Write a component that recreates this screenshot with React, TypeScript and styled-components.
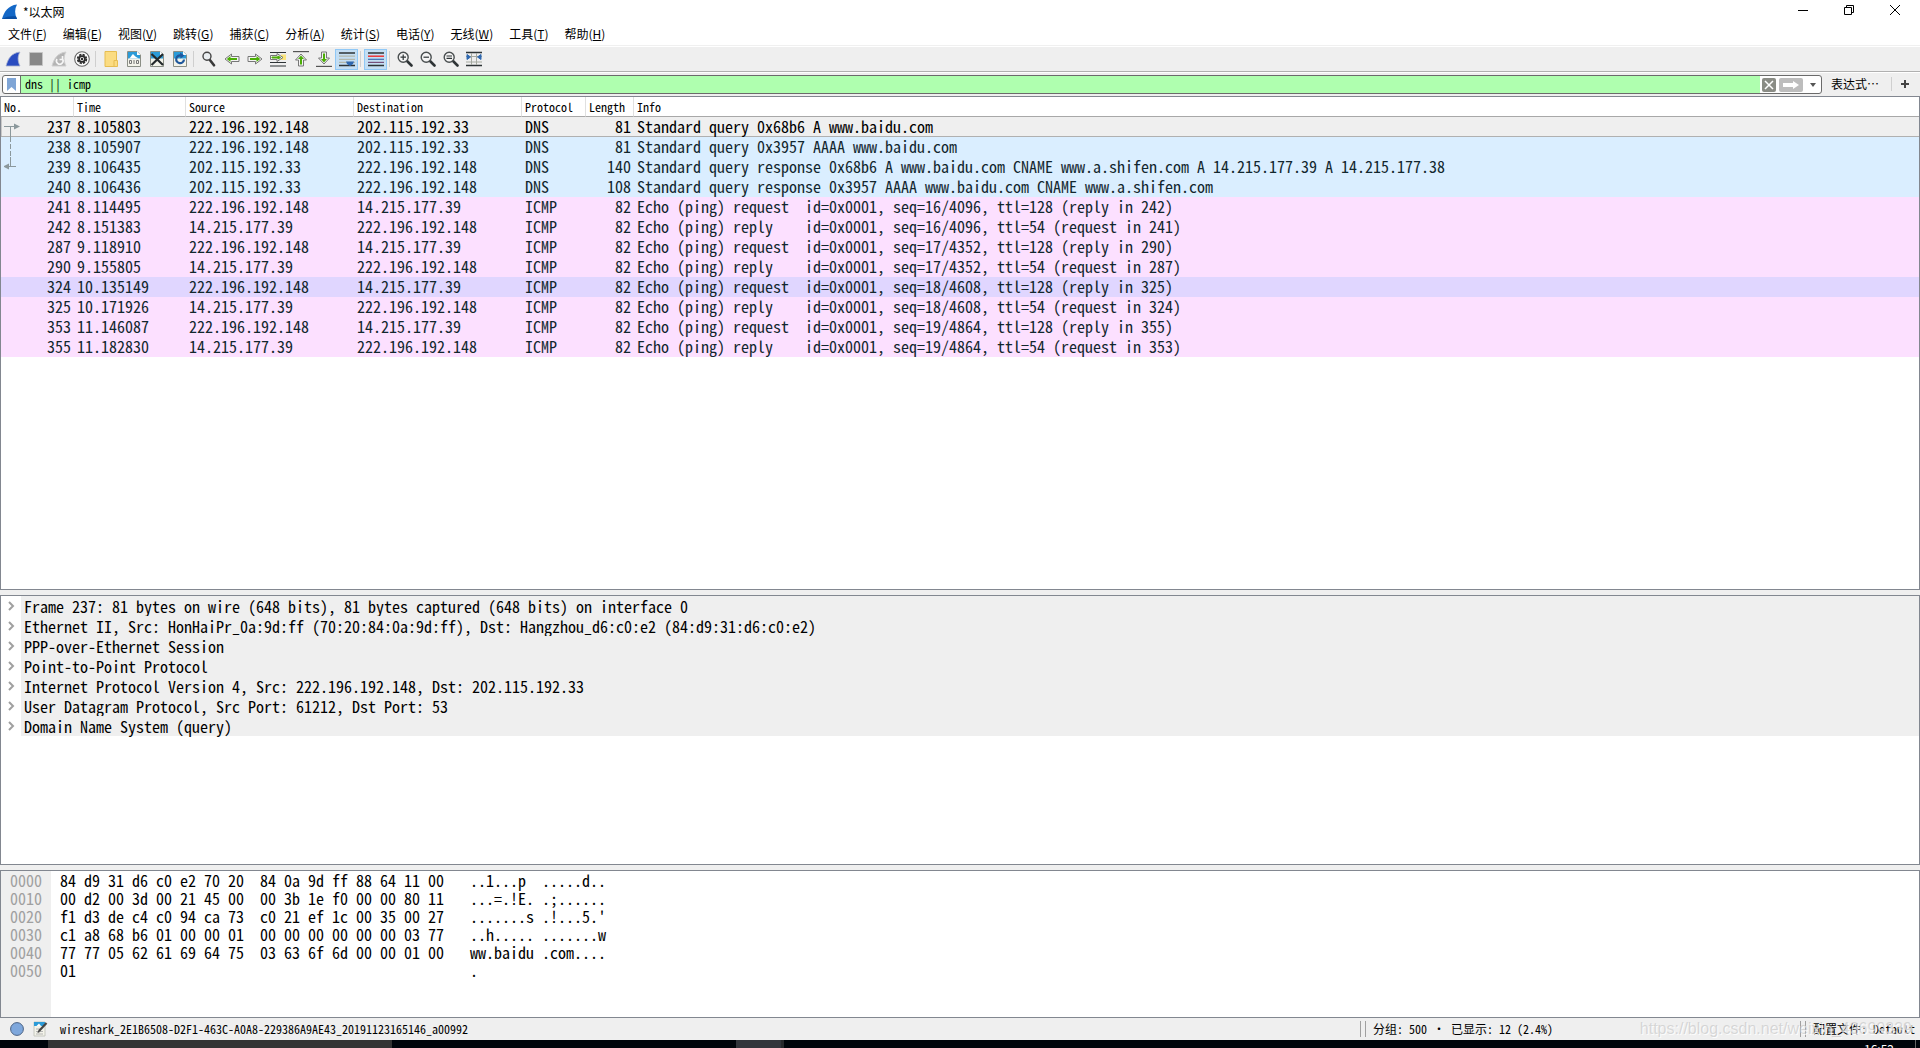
import React from "react";
import styled, { createGlobalStyle } from "styled-components";

const uiFont = '"Noto Sans CJK SC", "Noto Sans", sans-serif';
const monoFont = '"Noto Sans Mono CJK SC", "Liberation Mono", monospace';

const GlobalStyle = createGlobalStyle`
  *, *::before, *::after { box-sizing: border-box; }
  body { margin: 0; overflow: hidden; background: #fff; color: #000; }
  button, input { font: inherit; color: inherit; margin: 0; padding: 0; border: 0; background: none; border-radius: 0; outline: none; }
  svg { display: block; flex: none; }
`;

const Window = styled.div`
  display: flex;
  flex-direction: column;
  height: 100vh;
  font: 12px/18px ${monoFont};
  background: #efefef;
`;

const TitleBar = styled.header`
  display: flex;
  align-items: center;
  gap: 5px;
  height: 23px;
  padding: 0 2px;
  background: #fff;
  font-family: ${uiFont};
`;

const Title = styled.h1`
  flex: 1;
  margin: 0;
  font-size: 12px;
  font-weight: 400;
`;

const WindowButtons = styled.div`
  display: flex;
  align-self: flex-start;
`;

const WindowButton = styled.button`
  display: flex;
  align-items: center;
  justify-content: center;
  width: 46px;
  height: 20px;
`;

const MenuBar = styled.nav`
  display: flex;
  height: 23px;
  border-bottom: 1px solid #f0f0f0;
  background: #fff;
  font-family: ${uiFont};
`;

const MenuItem = styled.button`
  padding: 0 8px;
  white-space: nowrap;
`;

const Toolbar = styled.div`
  display: flex;
  align-items: center;
  height: 26px;
  padding: 0 1px;
  border-top: 1px solid #fff;
  border-bottom: 1px solid #b0b0b0;
`;

const ToolButton = styled.button<{ $on?: boolean }>`
  display: flex;
  align-items: center;
  justify-content: center;
  width: 23px;
  height: 21px;
  border: 1px solid ${(p) => (p.$on ? "#90c8f6" : "transparent")};
  background: ${(p) => (p.$on ? "#c4def3" : "transparent")};
`;

const ToolSeparator = styled.span`
  width: 6px;
  height: 16px;
  background: linear-gradient(#cfcfcf, #cfcfcf) 2px 0 / 1px 100% no-repeat;
`;

const FilterBar = styled.div`
  display: flex;
  align-items: flex-start;
  height: 24px;
  padding: 2px 11px 0 2px;
  border-top: 1px solid #fff;
`;

const FilterBox = styled.div`
  display: flex;
  align-items: center;
  flex: 1;
  height: 19px;
  margin-right: 9px;
  border: 1px solid #6b6b6b;
  border-radius: 3px;
  background: #fff;
  overflow: hidden;
`;

const BookmarkButton = styled.button`
  width: 18px;
  height: 17px;
  padding-left: 4px;
  border-right: 1px solid #6b6b6b;
`;

const FilterInput = styled.input`
  flex: 1;
  height: 17px;
  padding: 0 4px 2px;
  background: #afffaf;
`;

const FilterActions = styled.div`
  display: flex;
  align-items: center;
  gap: 3px;
  padding-left: 2px;
`;

const FilterAction = styled.button<{ $width: number; $fill?: string }>`
  display: flex;
  align-items: center;
  justify-content: center;
  width: ${(p) => p.$width}px;
  height: 14px;
  border-radius: 2px;
  background: ${(p) => p.$fill || "none"};
`;

const BarButton = styled.button`
  display: flex;
  align-items: center;
  height: 18px;
`;

const FilterSeparator = styled.span`
  width: 1px;
  height: 14px;
  margin: 2px 9px 0 12px;
  background: #cfcfcf;
`;

const Panels = styled.main`
  display: flex;
  flex-direction: column;
  flex: 1;
  gap: 5px;
  min-height: 0;
`;

const Panel = styled.section<{ $share: number }>`
  flex: ${(p) => p.$share} 1 0;
  min-height: 0;
  border: 1px solid #828790;
  background: #fff;
  overflow: hidden;
`;

const PacketTable = styled.table`
  width: 100%;
  table-layout: fixed;
  border-collapse: separate;
  border-spacing: 0;
`;

const HeadCell = styled.th<{ $width?: number }>`
  width: ${(p) => (p.$width ? p.$width + "px" : "auto")};
  height: 20px;
  padding: 0 3px;
  border-right: 1px solid #e0e0e0;
  border-bottom: 1px solid #a8a8a8;
  font-weight: 400;
  line-height: 18px;
  text-align: left;
  white-space: nowrap;
  &:last-child { border-right: 0; }
`;

type Tone = "selected" | "dns" | "icmp" | "hover";
const tones: Record<Tone, string> = {
  selected: "#efefef",
  dns: "#daeeff",
  icmp: "#fce0ff",
  hover: "#e0d6ff",
};

const PacketRow = styled.tr<{ $tone: Tone }>`
  height: 20px;
  background: ${(p) => tones[p.$tone]};
  color: ${(p) => (p.$tone === "selected" ? "#000" : "#12272e")};
  box-shadow: ${(p) => (p.$tone === "selected" ? "inset 0 -1px #b0b0b0, inset 1px 0 #c8c8c8" : "none")};
`;

const Cell = styled.td<{ $right?: boolean }>`
  height: 20px;
  padding: 0 3px 2px;
  font-size: 16px;
  line-height: 18px;
  text-align: ${(p) => (p.$right ? "right" : "left")};
  vertical-align: top;
  white-space: pre;
`;

const NumberCell = styled.div`
  display: flex;
  justify-content: space-between;
  height: 18px;
`;

const TreeList = styled.ul`
  margin: 0;
  padding: 0;
  list-style: none;
`;

const TreeItem = styled.li`
  display: flex;
  height: 20px;
  font-size: 16px;
  line-height: 20px;
`;

const Expander = styled.button`
  display: flex;
  align-items: center;
  width: 20px;
  padding-left: 7px;
`;

const TreeLabel = styled.span`
  flex: 1;
  padding-left: 3px;
  background: #efefef;
  white-space: pre;
`;

const HexPanel = styled(Panel)`
  display: flex;
`;

const HexColumn = styled.pre<{ $muted?: boolean }>`
  margin: 0;
  padding: 0 9px;
  padding-right: ${(p) => (p.$muted ? "9px" : "17px")};
  background: ${(p) => (p.$muted ? "#efefef" : "#fff")};
  color: ${(p) => (p.$muted ? "#a0a0a0" : "#000")};
  font: 16px/18px ${monoFont};
`;

const StatusBar = styled.footer`
  position: relative;
  display: grid;
  grid-template-columns: 1fr 440px 120px;
  align-items: center;
  height: 22px;
  white-space: pre;
`;

const StatusMain = styled.div`
  display: flex;
  align-items: center;
  padding-left: 10px;
`;

const StatusButton = styled.button`
  width: 23px;
`;

const StatusFile = styled.span`
  padding-left: 4px;
`;

const StatusSection = styled.div`
  height: 16px;
  margin-left: 4px;
  padding-left: 7px;
  border-left: 1px solid #a0a0a0;
  line-height: 16px;
`;

const StatusGroup = styled.div`
  height: 16px;
  border-left: 1px solid #a0a0a0;
`;

const Watermark = styled.span`
  position: absolute;
  right: 8px;
  top: 2px;
  color: rgba(190, 190, 190, 0.55);
  font: 16px/18px "Liberation Sans", sans-serif;
  text-shadow: 1px 1px rgba(255, 255, 255, 0.8);
`;

const Taskbar = styled.div`
  display: flex;
  height: 8px;
  padding-left: 48px;
  background: #00050b;
  overflow: hidden;
`;

const TaskSearch = styled.div`
  width: 344px;
  margin-right: 344px;
  background: #333;
`;

const TaskApp = styled.div`
  width: 48px;
  border-right: 3px solid #26282b;
  background: #32353b;
`;

const Clock = styled.time`
  margin-left: auto;
  padding-right: 21px;
  border-right: 1px solid #666;
  margin-right: 4px;
  color: #fff;
  font: 12px/18px ${uiFont};
`;

const Icon = ({ children, size = 16 }: { children: React.ReactNode; size?: number }) => (
  <svg width={size} height={size} viewBox="0 0 16 16" fill="none" aria-hidden="true">
    {children}
  </svg>
);

const finPath = "M1 15C3 8 6 2 15 1C12.5 5 12.5 10 15 15Z";

const Page = () => (
  <>
    <path d="M1.500 .5H11L14.500 4V15.500H1.500Z" fill="#f3f3ea" stroke="#8b8f86" />
    <path d="M2 1H11L14 4V7.500H2Z" fill="#2b9bd8" />
    <path d="M11 .5V4H14.500Z" fill="#fff" />
  </>
);

const Arrow = ({ turn = 0, bar = false }: { turn?: number; bar?: boolean }) => (
  <Icon>
    <g transform={`rotate(${turn} 8 8)`}>
      {bar && <path d="M15.400 0V16" stroke="#555" strokeWidth="1.200" />}
      <path
        d={bar ? "M1 5.500H7V2.500L13 8L7 13.500V10.500H1Z" : "M1 5.500H8.500V3L15 8L8.500 13V10.500H1Z"}
        fill="#f4f4f4"
        stroke="#777"
        strokeLinejoin="round"
      />
      <path
        d={bar ? "M2.500 7H8V5L11.500 8L8 11V9H2.500Z" : "M3 7H9.500V5L13.200 8L9.500 11V9H3Z"}
        fill="#4cae06"
      />
    </g>
  </Icon>
);

const Lens = ({ mark }: { mark: string }) => (
  <Icon>
    <path d="M9.500 9.500L14.500 14.500" stroke="#2e3436" strokeWidth="2.600" strokeLinecap="round" />
    <circle cx="6.200" cy="6.200" r="5" fill="#f4f4f4" stroke="#4a4f50" strokeWidth="1.400" />
    <path d={mark} stroke="#2e3436" strokeWidth="1.200" />
  </Icon>
);

type Tool = { name: string; on?: boolean; icon: React.ReactNode } | null;

const tools: Tool[] = [
  { name: "开始捕获", icon: <Icon><path d={finPath} fill="#2a4cc0" stroke="#aab3cf" strokeWidth=".8" /></Icon> },
  { name: "停止捕获", icon: <Icon><path d="M1.500 1.500H14.500V14.500H1.500Z" fill="#888" stroke="#c4c4c4" /></Icon> },
  {
    name: "重新开始捕获",
    icon: (
      <Icon>
        <path d={finPath} fill="#b4b4b4" stroke="#cfcfcf" />
        <path d="M6 8A3.300 3.300 0 1 0 11.500 8M11.500 5V8.500H8.500" stroke="#f6f6f6" strokeWidth="1.600" />
      </Icon>
    ),
  },
  {
    name: "捕获选项",
    icon: (
      <Icon>
        <circle cx="8" cy="8" r="7.300" fill="#fff" stroke="#666" strokeWidth="1.100" />
        <circle cx="8" cy="8" r="4.300" stroke="#2b2b2b" strokeWidth="1.800" strokeDasharray="2.300 1.080" />
        <circle cx="8" cy="8" r="2.900" fill="#fff" stroke="#2b2b2b" strokeWidth="1.800" />
        <circle cx="8" cy="8" r="1.200" fill="#2b2b2b" />
      </Icon>
    ),
  },
  null,
  {
    name: "打开",
    icon: (
      <Icon>
        <path d="M2 .5H13.500V15.500H2Z" fill="#fbdc82" stroke="#e6bd51" />
        <path d="M11 9.500H14.500V15.500H11Z" fill="#fbdc82" stroke="#e6bd51" />
      </Icon>
    ),
  },
  {
    name: "保存",
    icon: (
      <Icon>
        <Page />
        <path d="M3 7.500C5 6.500 5.500 4 7 3C8.500 4.500 10 6.500 13 7.500Z" fill="#fff" />
        <path d="M3.500 9.500H5.500V12.500H3.500ZM8 9V13M10.500 9.500H12.500V12.500H10.500Z" stroke="#777" />
      </Icon>
    ),
  },
  { name: "关闭", icon: <Icon><Page /><path d="M2.500 3L14 14M14 3L2.500 14" stroke="#24292b" strokeWidth="2.200" /></Icon> },
  {
    name: "重新加载",
    icon: <Icon><Page /><path d="M9 4.500A3.900 3.900 0 1 0 12 8.500" stroke="#20589c" strokeWidth="2.200" /><path d="M8 1.500L12.500 4.500L8.500 7.500Z" fill="#20589c" /></Icon>,
  },
  null,
  {
    name: "查找",
    icon: (
      <Icon>
        <path d="M8.500 8.500L13 14.300" stroke="#3a3a3a" strokeWidth="2.600" strokeLinecap="round" />
        <circle cx="6" cy="5.200" r="4" fill="#e9edf0" stroke="#444" strokeWidth="1.400" />
      </Icon>
    ),
  },
  { name: "后退", icon: <Arrow turn={180} /> },
  { name: "前进", icon: <Arrow /> },
  {
    name: "转到分组",
    icon: (
      <Icon>
        <path d="M0 1.500H16M0 11.500H16M0 15H16" stroke="#2e3436" strokeWidth="1.200" />
        <path d="M11 3.500H16V9H11Z" fill="#fbe57c" />
        <path d="M.5 4.500H7V2.500L13 6.500L7 10.500V8.500H.5Z" fill="#f4f4f4" stroke="#777" />
        <path d="M2 6H8V5L10.500 6.500L8 8V7H2Z" fill="#4cae06" stroke="#4cae06" />
      </Icon>
    ),
  },
  { name: "首个分组", icon: <Arrow turn={-90} bar /> },
  { name: "末个分组", icon: <Arrow turn={90} bar /> },
  {
    name: "自动滚动",
    on: true,
    icon: (
      <Icon>
        <path d="M0 2H16M0 14.500H16" stroke="#2e3436" strokeWidth="1.300" />
        <path d="M0 5.200H16M0 8.300H16M0 11.400H16" stroke="#b4b8ac" strokeWidth="1.200" />
        <path d="M7 10.500H15L14 13L11 15L8 13Z" fill="#2f68b0" />
      </Icon>
    ),
  },
  null,
  {
    name: "着色",
    on: true,
    icon: (
      <Icon>
        <path d="M0 2H16M0 14.500H16" stroke="#2e3436" strokeWidth="1.300" />
        <path d="M0 5.200H16" stroke="#ef2929" strokeWidth="1.400" />
        <path d="M0 8.300H16" stroke="#3d6cb0" strokeWidth="1.200" />
        <path d="M0 11.400H16" stroke="#75507b" strokeWidth="1.200" />
      </Icon>
    ),
  },
  null,
  { name: "放大", icon: <Lens mark="M3.500 6.200H9M6.200 3.500V9" /> },
  { name: "缩小", icon: <Lens mark="M3.500 6.200H9" /> },
  { name: "普通大小", icon: <Lens mark="M3.500 5H9M3.500 7.400H9" /> },
  {
    name: "调整列宽",
    icon: (
      <Icon>
        <path d="M0 1.500H16M0 14.500H16" stroke="#2e3436" strokeWidth="1.400" />
        <path d="M0 5.500H16M0 11H16M5.500 2V14M10.500 2V14" stroke="#a5a9a0" />
        <path d="M1 3.500L4.500 6L1 8.500ZM15 3.500L11.500 6L15 8.500Z" fill="#2f68b0" stroke="#2f68b0" />
      </Icon>
    ),
  },
];

const menus = [
  ["文件", "F"], ["编辑", "E"], ["视图", "V"], ["跳转", "G"], ["捕获", "C"], ["分析", "A"],
  ["统计", "S"], ["电话", "Y"], ["无线", "W"], ["工具", "T"], ["帮助", "H"],
];

const columns: [string, number?][] = [
  ["No.", 73], ["Time", 112], ["Source", 168], ["Destination", 168], ["Protocol", 64], ["Length", 48], ["Info"],
];

const me = "222.196.192.148";
const dns = "202.115.192.33";
const web = "14.215.177.39";

type Packet = [number, string, string, string, string, number, string, Tone];

const packets: Packet[] = [
  [237, "8.105803", me, dns, "DNS", 81, "Standard query 0x68b6 A www.baidu.com", "selected"],
  [238, "8.105907", me, dns, "DNS", 81, "Standard query 0x3957 AAAA www.baidu.com", "dns"],
  [239, "8.106435", dns, me, "DNS", 140, "Standard query response 0x68b6 A www.baidu.com CNAME www.a.shifen.com A 14.215.177.39 A 14.215.177.38", "dns"],
  [240, "8.106436", dns, me, "DNS", 108, "Standard query response 0x3957 AAAA www.baidu.com CNAME www.a.shifen.com", "dns"],
  [241, "8.114495", me, web, "ICMP", 82, "Echo (ping) request  id=0x0001, seq=16/4096, ttl=128 (reply in 242)", "icmp"],
  [242, "8.151383", web, me, "ICMP", 82, "Echo (ping) reply    id=0x0001, seq=16/4096, ttl=54 (request in 241)", "icmp"],
  [287, "9.118910", me, web, "ICMP", 82, "Echo (ping) request  id=0x0001, seq=17/4352, ttl=128 (reply in 290)", "icmp"],
  [290, "9.155805", web, me, "ICMP", 82, "Echo (ping) reply    id=0x0001, seq=17/4352, ttl=54 (request in 287)", "icmp"],
  [324, "10.135149", me, web, "ICMP", 82, "Echo (ping) request  id=0x0001, seq=18/4608, ttl=128 (reply in 325)", "hover"],
  [325, "10.171926", web, me, "ICMP", 82, "Echo (ping) reply    id=0x0001, seq=18/4608, ttl=54 (request in 324)", "icmp"],
  [353, "11.146087", me, web, "ICMP", 82, "Echo (ping) request  id=0x0001, seq=19/4864, ttl=128 (reply in 355)", "icmp"],
  [355, "11.182830", web, me, "ICMP", 82, "Echo (ping) reply    id=0x0001, seq=19/4864, ttl=54 (request in 353)", "icmp"],
];

const layers = [
  "Frame 237: 81 bytes on wire (648 bits), 81 bytes captured (648 bits) on interface 0",
  "Ethernet II, Src: HonHaiPr_0a:9d:ff (70:20:84:0a:9d:ff), Dst: Hangzhou_d6:c0:e2 (84:d9:31:d6:c0:e2)",
  "PPP-over-Ethernet Session",
  "Point-to-Point Protocol",
  "Internet Protocol Version 4, Src: 222.196.192.148, Dst: 202.115.192.33",
  "User Datagram Protocol, Src Port: 61212, Dst Port: 53",
  "Domain Name System (query)",
];

const bytes = [
  ["0000", "84 d9 31 d6 c0 e2 70 20  84 0a 9d ff 88 64 11 00", "..1...p  .....d.."],
  ["0010", "00 d2 00 3d 00 21 45 00  00 3b 1e f0 00 00 80 11", "...=.!E. .;......"],
  ["0020", "f1 d3 de c4 c0 94 ca 73  c0 21 ef 1c 00 35 00 27", ".......s .!...5.'"],
  ["0030", "c1 a8 68 b6 01 00 00 01  00 00 00 00 00 00 03 77", "..h..... .......w"],
  ["0040", "77 77 05 62 61 69 64 75  03 63 6f 6d 00 00 01 00", "ww.baidu .com...."],
  ["0050", "01", "."],
];

const relationPaths = [
  <><path d="M-1 9.500H12M6.500 9.500V20" stroke="#8b989c" /><path d="M10 6.500L16 9.500L10 12.500Z" fill="#8b989c" /></>,
  <path d="M6.500 0V20" stroke="#8b989c" strokeDasharray="5 2" />,
  <><path d="M4 9.500H12M6.500 0V9.500" stroke="#8b989c" /><path d="M5 6.500L-1 9.500L5 12.500Z" fill="#8b989c" /></>,
];

const Relation = ({ row }: { row: number }) => (
  <svg width="18" height="20" viewBox="0 0 18 20" fill="none" aria-hidden="true">
    {relationPaths[row]}
  </svg>
);

export default function App() {
  return (
    <Window>
      <GlobalStyle />
      <TitleBar>
        <Icon>
          <path d="M0 15C2 8 6 1.500 15 .5C12.500 5 12.500 10 15 15Z" fill="#1468c7" />
          <path d="M0 15C5 12 10 12 14 12.500L15 15Z" fill="#0a4ea3" />
        </Icon>
        <Title>*以太网</Title>
        <WindowButtons>
          <WindowButton aria-label="最小化"><svg width="10" height="10"><path d="M0 5.500H10" stroke="#000" /></svg></WindowButton>
          <WindowButton aria-label="还原"><svg width="10" height="10" fill="none"><path d="M.5 2.500H7.500V9.500H.5ZM2.500 2.500V.5H9.500V7.500H7.500" stroke="#000" /></svg></WindowButton>
          <WindowButton aria-label="关闭窗口"><svg width="10" height="10"><path d="M0 0L10 10M10 0L0 10" stroke="#000" /></svg></WindowButton>
        </WindowButtons>
      </TitleBar>

      <MenuBar>
        {menus.map(([label, key]) => (
          <MenuItem key={key}>{label}(<u>{key}</u>)</MenuItem>
        ))}
      </MenuBar>

      <Toolbar role="toolbar">
        {tools.map((tool, i) =>
          tool ? (
            <ToolButton key={i} $on={tool.on} aria-label={tool.name}>{tool.icon}</ToolButton>
          ) : (
            <ToolSeparator key={i} />
          ),
        )}
      </Toolbar>

      <FilterBar>
        <FilterBox>
          <BookmarkButton aria-label="书签">
            <svg width="9" height="13"><path d="M0 0H9V13L4.500 9L0 13Z" fill="#7fa5d6" /></svg>
          </BookmarkButton>
          <FilterInput aria-label="显示过滤器" defaultValue="dns || icmp" spellCheck={false} />
          <FilterActions>
            <FilterAction $width={14} $fill="#8a8c85" aria-label="清除">
              <svg width="10" height="10"><path d="M1 1L9 9M9 1L1 9" stroke="#fff" strokeWidth="1.500" /></svg>
            </FilterAction>
            <FilterAction $width={24} $fill="#bdbdbd" aria-label="应用">
              <svg width="16" height="8"><path d="M0 2H10V0L16 4L10 8V6H0Z" fill="#fff" /></svg>
            </FilterAction>
            <FilterAction $width={15} aria-label="历史">
              <svg width="6" height="4"><path d="M0 0H6L3 4Z" fill="#555" /></svg>
            </FilterAction>
          </FilterActions>
        </FilterBox>
        <BarButton>表达式…</BarButton>
        <FilterSeparator />
        <BarButton aria-label="添加"><svg width="8" height="8"><path d="M4 0V8M0 4H8" stroke="#444" strokeWidth="2" /></svg></BarButton>
      </FilterBar>

      <Panels>
        <Panel $share={492}>
          <PacketTable>
            <thead>
              <tr>
                {columns.map(([name, width]) => (
                  <HeadCell key={name} $width={width}>{name}</HeadCell>
                ))}
              </tr>
            </thead>
            <tbody>
              {packets.map(([no, time, src, dst, protocol, length, info, tone], i) => (
                <PacketRow key={no} $tone={tone}>
                  <Cell><NumberCell><Relation row={i} />{no}</NumberCell></Cell>
                  <Cell>{time}</Cell>
                  <Cell>{src}</Cell>
                  <Cell>{dst}</Cell>
                  <Cell>{protocol}</Cell>
                  <Cell $right>{length}</Cell>
                  <Cell>{info}</Cell>
                </PacketRow>
              ))}
            </tbody>
          </PacketTable>
        </Panel>

        <Panel $share={268}>
          <TreeList>
            {layers.map((layer) => (
              <TreeItem key={layer}>
                <Expander aria-label="展开">
                  <svg width="7" height="10" fill="none"><path d="M1 1L5 5L1 9" stroke="#a0a0a0" strokeWidth="2" /></svg>
                </Expander>
                <TreeLabel>{layer}</TreeLabel>
              </TreeItem>
            ))}
          </TreeList>
        </Panel>

        <HexPanel $share={146}>
          <HexColumn $muted>{bytes.map((b) => b[0]).join("\n")}</HexColumn>
          <HexColumn>{bytes.map((b) => b[1]).join("\n")}</HexColumn>
          <HexColumn>{bytes.map((b) => b[2]).join("\n")}</HexColumn>
        </HexPanel>
      </Panels>

      <StatusBar>
        <StatusMain>
          <StatusButton aria-label="专家信息">
            <svg width="14" height="14"><circle cx="7" cy="7" r="6.400" fill="#7ea7dc" stroke="#4d6384" /></svg>
          </StatusButton>
          <StatusButton aria-label="捕获文件注释">
            <Icon>
              <path d="M1 1H12V15H1Z" fill="#f3f3ea" stroke="#c6c8c0" />
              <path d="M1 1H12V5H1Z" fill="#2b9bd8" />
              <path d="M3.500 5L6 2.500L8 5Z" fill="#fff" />
              <path d="M3 8H8M3 10.500H10M3 13H10" stroke="#b5b5b5" />
              <path d="M6 10L13.500 2" stroke="#444" strokeWidth="2.200" />
              <path d="M4.500 12L5.200 9.300L7 11Z" fill="#444" />
            </Icon>
          </StatusButton>
          <StatusFile>wireshark_2E1B6508-D2F1-463C-A0A8-229386A9AE43_20191123165146_a00992</StatusFile>
        </StatusMain>
        <StatusGroup><StatusSection>分组: 500 · 已显示: 12 (2.4%)</StatusSection></StatusGroup>
        <StatusGroup><StatusSection>配置文件: Default</StatusSection></StatusGroup>
        <Watermark>https://blog.csdn.net/weixin_43699339</Watermark>
      </StatusBar>

      <Taskbar>
        <TaskSearch />
        <TaskApp />
        <Clock>16:52</Clock>
      </Taskbar>
    </Window>
  );
}
